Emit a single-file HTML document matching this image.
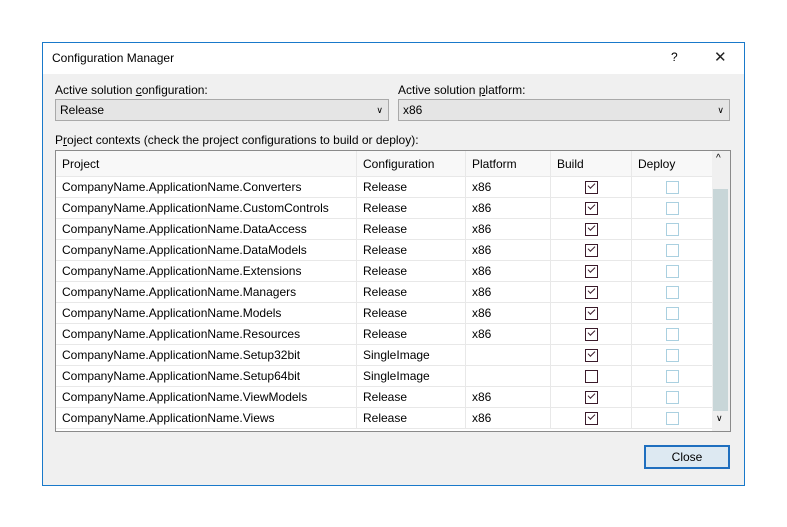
<!DOCTYPE html><html><head><style>
body{margin:0;width:787px;height:527px;background:#fff;font-family:"Liberation Sans",sans-serif;font-size:12px;color:#000;position:relative;overflow:hidden}
.a{position:absolute}
.win{left:42px;top:42px;width:701px;height:442px;border:1px solid #1979ca;background:#f0f0f0}
.tb{left:0;top:0;width:701px;height:31px;background:#fff}
.cb{height:20px;border:1px solid #a9a9a9;background:#e5e5e5;line-height:20px;padding-left:4px;box-sizing:content-box}
.grid{left:12px;top:107px;width:674px;height:280px;border:1px solid #8a8a8a;background:#fff;overflow:hidden}
table{border-collapse:collapse;position:absolute;left:0;top:0}
td{height:20px;border-right:1px solid #e8e8e8;border-bottom:1px solid #e8e8e8;padding:0 0 0 6px;white-space:nowrap}
tr.h td{height:25px;background:#f8f8f8}
.ck{display:inline-block;width:11px;height:11px;border:1px solid #3a1a2a;vertical-align:middle;position:relative}
.ck.on::after{content:"";position:absolute;left:2px;top:1px;width:6px;height:3px;border-left:1px solid #3a1a2a;border-bottom:1px solid #3a1a2a;transform:rotate(-45deg)}
.dk{display:inline-block;width:11px;height:11px;border:1px solid #aad0e0;vertical-align:middle}
.c{text-align:center;padding:0}
</style></head><body>
<div class="a win">
<div class="a tb"><span class="a" style="left:9px;top:8px">Configuration Manager</span>
<span class="a" style="left:628px;top:7px">?</span><span class="a" style="left:671px;top:5px;font-size:15px;font-weight:normal;color:#222">✕</span></div>
<span class="a" style="left:12px;top:40px">Active solution <u>c</u>onfiguration:</span>
<div class="a cb" style="left:12px;top:56px;width:328px">Release<span style="position:absolute;right:5px;font-size:9px">∨</span></div>
<span class="a" style="left:355px;top:40px">Active solution <u>p</u>latform:</span>
<div class="a cb" style="left:355px;top:56px;width:326px">x86<span style="position:absolute;right:5px;font-size:9px">∨</span></div>
<span class="a" style="left:12px;top:90px">P<u>r</u>oject contexts (check the project configurations to build or deploy):</span>
<div class="a grid">
<table>
<tr class="h"><td style="width:294px">Project</td><td style="width:102px">Configuration</td><td style="width:78px">Platform</td><td style="width:74px">Build</td><td style="width:74px">Deploy</td></tr>
<tr><td>CompanyName.ApplicationName.Converters</td><td>Release</td><td>x86</td><td class="c"><span class="ck on"></span></td><td class="c"><span class="dk"></span></td></tr>
<tr><td>CompanyName.ApplicationName.CustomControls</td><td>Release</td><td>x86</td><td class="c"><span class="ck on"></span></td><td class="c"><span class="dk"></span></td></tr>
<tr><td>CompanyName.ApplicationName.DataAccess</td><td>Release</td><td>x86</td><td class="c"><span class="ck on"></span></td><td class="c"><span class="dk"></span></td></tr>
<tr><td>CompanyName.ApplicationName.DataModels</td><td>Release</td><td>x86</td><td class="c"><span class="ck on"></span></td><td class="c"><span class="dk"></span></td></tr>
<tr><td>CompanyName.ApplicationName.Extensions</td><td>Release</td><td>x86</td><td class="c"><span class="ck on"></span></td><td class="c"><span class="dk"></span></td></tr>
<tr><td>CompanyName.ApplicationName.Managers</td><td>Release</td><td>x86</td><td class="c"><span class="ck on"></span></td><td class="c"><span class="dk"></span></td></tr>
<tr><td>CompanyName.ApplicationName.Models</td><td>Release</td><td>x86</td><td class="c"><span class="ck on"></span></td><td class="c"><span class="dk"></span></td></tr>
<tr><td>CompanyName.ApplicationName.Resources</td><td>Release</td><td>x86</td><td class="c"><span class="ck on"></span></td><td class="c"><span class="dk"></span></td></tr>
<tr><td>CompanyName.ApplicationName.Setup32bit</td><td>SingleImage</td><td></td><td class="c"><span class="ck on"></span></td><td class="c"><span class="dk"></span></td></tr>
<tr><td>CompanyName.ApplicationName.Setup64bit</td><td>SingleImage</td><td></td><td class="c"><span class="ck"></span></td><td class="c"><span class="dk"></span></td></tr>
<tr><td>CompanyName.ApplicationName.ViewModels</td><td>Release</td><td>x86</td><td class="c"><span class="ck on"></span></td><td class="c"><span class="dk"></span></td></tr>
<tr><td>CompanyName.ApplicationName.Views</td><td>Release</td><td>x86</td><td class="c"><span class="ck on"></span></td><td class="c"><span class="dk"></span></td></tr>
</table>
<div class="a" style="left:656px;top:0;width:18px;height:280px;background:#f0f0f0"></div>
<div class="a" style="left:657px;top:38px;width:15px;height:222px;background:#c8d6d8"></div>
<span class="a" style="left:660px;top:2px;font-size:10px">^</span>
<span class="a" style="left:660px;top:262px;font-size:9px">∨</span>
</div>
<div class="a" style="left:601px;top:402px;width:82px;height:20px;border:2px solid #1f6fbf;background:#dde9f2;text-align:center;line-height:20px">Close</div>
</div>
</body></html>
